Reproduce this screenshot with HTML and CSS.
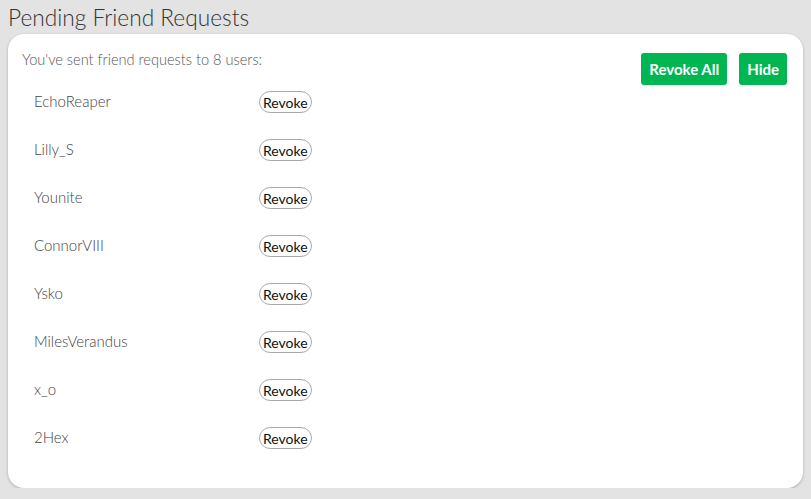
FILE: index.html
```html
<!DOCTYPE html>
<html lang="en">
<head>
    <meta charset="UTF-8">
    <title>Pending Friend Requests</title>
    <link rel="stylesheet" href="styles.css">
</head>
<body>
    <h1 class="title">Pending Friend Requests</h1>
    <div class="card">
        <div class="card-head">
            <p class="intro">You've sent friend requests to 8 users:</p>
            <div class="actions">
                <button class="btn-green">Revoke All</button>
                <button class="btn-green">Hide</button>
            </div>
        </div>
        <ul class="requests">
            <li><span class="name">EchoReaper</span><button class="revoke">Revoke</button></li>
            <li><span class="name">Lilly_S</span><button class="revoke">Revoke</button></li>
            <li><span class="name">Younite</span><button class="revoke">Revoke</button></li>
            <li><span class="name">ConnorVIII</span><button class="revoke">Revoke</button></li>
            <li><span class="name">Ysko</span><button class="revoke">Revoke</button></li>
            <li><span class="name">MilesVerandus</span><button class="revoke">Revoke</button></li>
            <li><span class="name">x_o</span><button class="revoke">Revoke</button></li>
            <li><span class="name">2Hex</span><button class="revoke">Revoke</button></li>
        </ul>
    </div>
</body>
</html>
```

FILE: styles.css
```css
body {
    margin: 0;
    padding: 0 8px;
    background-color: #e3e3e3;
    font-family: Lato, "Open Sans", sans-serif;
    color: #444;
}
.title {
    margin: 0;
    padding-top: 3px;
    height: 31px;
    font-size: 22.7px;
    font-weight: 300;
    color: #333;
    line-height: 30px;
}
.card {
    background-color: #fff;
    border-radius: 16px;
    box-shadow: 0 1px 3px rgba(0, 0, 0, 0.25);
    height: 454px;
    box-sizing: border-box;
    padding: 17px 16px 0 14px;
}
.card-head {
    display: flex;
    justify-content: space-between;
    align-items: flex-start;
}
.intro {
    margin: 0;
    font-size: 14.6px;
    line-height: 18px;
    color: #555;
    font-weight: 300;
}
.actions {
    display: flex;
    gap: 12px;
    margin-top: 2px;
}
.btn-green {
    background-color: #00b653;
    color: #fff;
    border: none;
    border-radius: 3px;
    height: 32px;
    padding: 0 8px;
    font-family: inherit;
    font-size: 15px;
    font-weight: 700;
    cursor: pointer;
}
.requests {
    list-style: none;
    margin: -8px 0 0 0;
    padding: 0 0 0 12px;
}
.requests li {
    display: flex;
    align-items: center;
    height: 48px;
}
.name {
    width: 225px;
    font-size: 15px;
    color: #444;
    font-weight: 300;
}
.revoke {
    height: 22px;
    margin-top: 2px;
    padding: 0 3px;
    background: #fff;
    border: 1px solid #aaa;
    border-radius: 11px;
    font-family: inherit;
    font-size: 14px;
    color: #111;
    cursor: pointer;
}
```
